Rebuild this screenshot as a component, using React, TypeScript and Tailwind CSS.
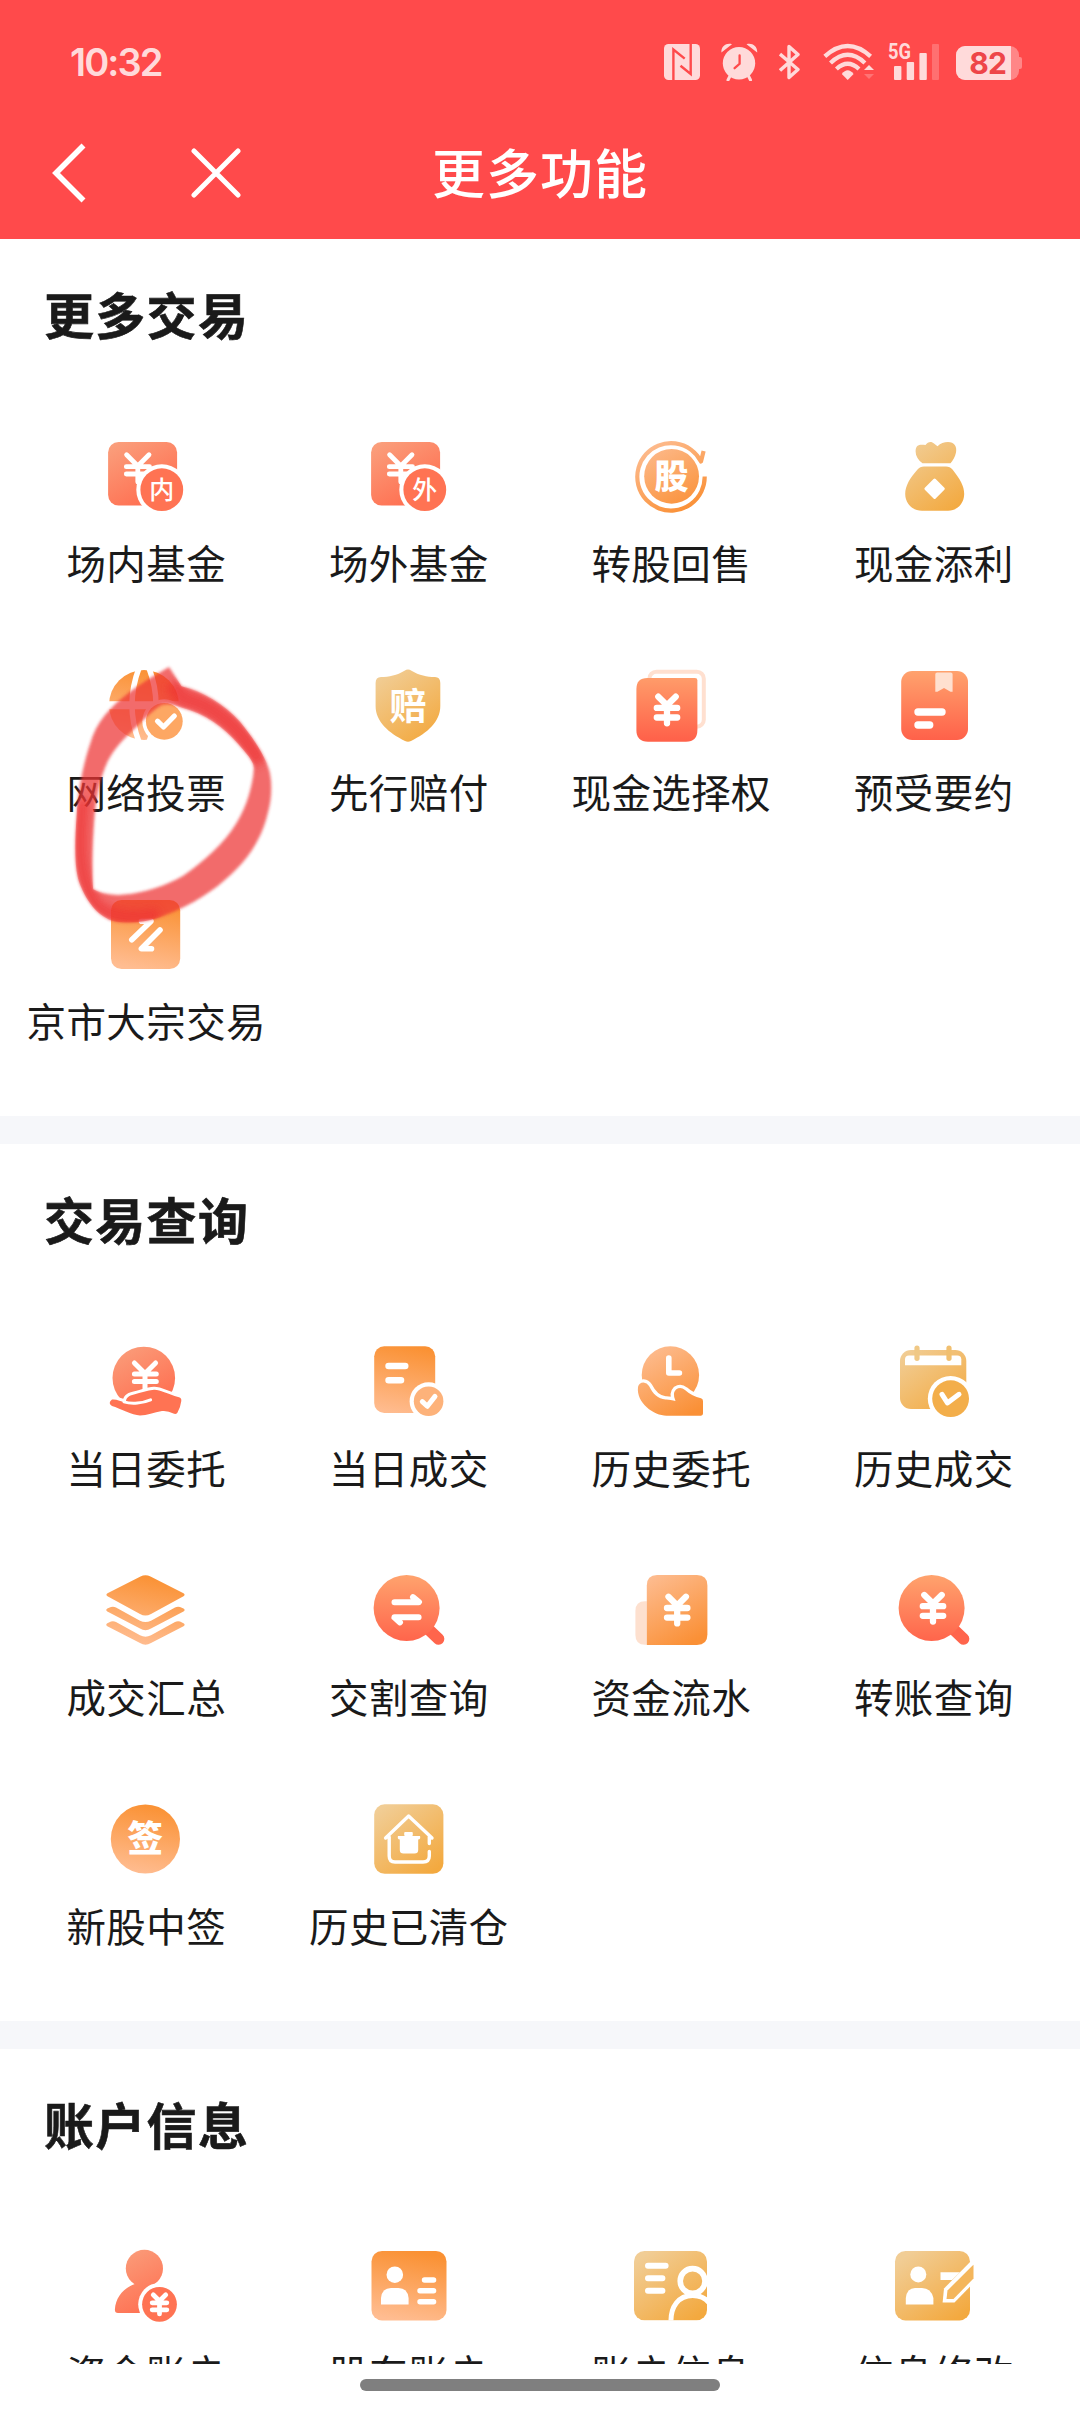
import type { ReactNode } from "react";

const FONT = '"Noto Sans CJK SC", "Noto Sans", sans-serif';

type Tone = "coral" | "red" | "amber" | "orange" | "gold";
const fillOf = (t: Tone) => `url(#g-${t})`;

function Gradients() {
  return (
    <svg className="absolute h-0 w-0" aria-hidden="true">
      <defs>
        <linearGradient id="g-coral" gradientUnits="userSpaceOnUse" x1="14" y1="8" x2="50" y2="72">
          <stop offset="0" stopColor="#faa07d" />
          <stop offset="1" stopColor="#ff6e50" />
        </linearGradient>
        <linearGradient id="g-red" gradientUnits="userSpaceOnUse" x1="44" y1="10" x2="44" y2="78">
          <stop offset="0" stopColor="#ffa26d" />
          <stop offset="1" stopColor="#ff624a" />
        </linearGradient>
        <linearGradient id="g-amber" gradientUnits="userSpaceOnUse" x1="52" y1="10" x2="38" y2="80">
          <stop offset="0" stopColor="#fa9133" />
          <stop offset="1" stopColor="#ffbd92" />
        </linearGradient>
        <linearGradient id="g-orange" gradientUnits="userSpaceOnUse" x1="24" y1="12" x2="62" y2="78">
          <stop offset="0" stopColor="#fdbb8e" />
          <stop offset="1" stopColor="#fa9036" />
        </linearGradient>
        <linearGradient id="g-gold" gradientUnits="userSpaceOnUse" x1="18" y1="12" x2="66" y2="78">
          <stop offset="0" stopColor="#f1cd95" />
          <stop offset="1" stopColor="#f3a93f" />
        </linearGradient>
      </defs>
    </svg>
  );
}

function Icon({ children }: { children: ReactNode }) {
  return (
    <svg viewBox="0 0 88 88" className="block h-[88px] w-[88px] shrink-0" fill="none" strokeLinecap="round" strokeLinejoin="round">
      {children}
    </svg>
  );
}

/* Yuan sign drawn around the point where its arms meet. */
function Yuan({ x, y, s = 1, w = 6.3 }: { x: number; y: number; s?: number; w?: number }) {
  return (
    <path
      transform={`translate(${x} ${y}) scale(${s})`}
      d="M-8.7 -8.6 L0 0 L8.7 -8.6 M0 0 V18 M-10.2 2.6 H10.2 M-10.2 12.2 H10.2"
      stroke="#fff"
      strokeWidth={w}
    />
  );
}

function Glyph({ x, y, size, children, weight = 700 }: { x: number; y: number; size: number; children: string; weight?: number }) {
  return (
    <text x={x} y={y} fontSize={size} fontWeight={weight} fill="#fff" textAnchor="middle" fontFamily={FONT}>
      {children}
    </text>
  );
}

function Fund({ char }: { char: string }) {
  return (
    <Icon>
      <rect x="6.1" y="10" width="69" height="63.5" rx="10.5" fill={fillOf("coral")} />
      <path d="M24.6 22.8 L35.8 34 L47 22.8 M35.8 34 V50 M24.3 34.7 H47.5 M24.3 42 H47.5" stroke="#fff" strokeWidth="4.8" />
      <circle cx="59.8" cy="57.7" r="25.5" fill="#fff" />
      <circle cx="59.8" cy="57.7" r="21.4" fill="#ff7353" />
      <Glyph x={59.8} y={67} size={25} weight={500}>{char}</Glyph>
    </Icon>
  );
}

function Convert() {
  return (
    <Icon>
      <path d="M77.7 44.5 A33.7 33.7 0 1 1 74 29.5 L76.6 19" stroke={fillOf("orange")} strokeWidth="4.2" strokeLinecap="butt" />
      <circle cx="44.6" cy="44.3" r="27.4" fill={fillOf("orange")} />
      <Glyph x={44.6} y={56.6} size={34} weight={900}>股</Glyph>
    </Icon>
  );
}

function MoneyBag() {
  return (
    <Icon>
      <path d="M32.5 31.3 C28 28 25.6 24 25.6 19.5 C25.6 12.5 29.5 12.3 35.5 13 C38 9.2 42 9.4 44 11.6 L47.5 14.2 C50.5 11 54 10 58 10 C64.3 10 67.2 14.5 66 20.5 C65 25 63 28.5 60.5 31.3 Z" fill={fillOf("gold")} />
      <path d="M34 34.4 H56 Q60 34.4 62.5 37.6 C70 47 74.2 54 74.2 62 C74 72 67 78.7 58 78.7 H32 C22 78.7 15.2 71 15.2 62 C15.2 54 20 46 27.5 37.6 Q30 34.4 34 34.4 Z" fill={fillOf("gold")} />
      <path d="M44.6 48 L53.3 56.7 L44.6 65.4 L35.9 56.7 Z" fill="#fff" stroke="#fff" strokeWidth="3" />
    </Icon>
  );
}

function Globe() {
  return (
    <Icon>
      <circle cx="42" cy="44" r="35" fill={fillOf("amber")} />
      <path d="M37 7 Q23 44 37 81 M47 7 Q61 44 47 81" stroke="#fff" strokeWidth="5.5" />
      <path d="M4 44.3 H80" stroke="#fff" strokeWidth="8" />
      <circle cx="62.3" cy="60.3" r="22" fill="#fff" />
      <circle cx="62.3" cy="60.3" r="18.4" fill="#fda763" />
      <path d="M55.5 60.2 L61.5 66 L72.3 55" stroke="#fff" strokeWidth="5.2" />
    </Icon>
  );
}

function Shield() {
  return (
    <Icon>
      <path d="M39.5 9.8 Q43 7 46.5 9.8 C54 14.5 62 16 70 16 Q75.3 16 75.3 22 V45 C75.3 61 62 72 46 80 Q43 81.5 40 80 C24 72 10.6 61 10.6 45 V22 Q10.6 16 16 16 C24 16 32 14.5 39.5 9.8 Z" fill={fillOf("gold")} />
      <Glyph x={43.2} y={58.6} size={37}>赔</Glyph>
    </Icon>
  );
}

function CashOption() {
  return (
    <Icon>
      <rect x="22.4" y="10.7" width="54.4" height="55" rx="7" stroke="#ffe0d0" strokeWidth="4" />
      <path d="M20.4 17 H68 Q70.4 17 70.4 19.4 V69 Q70.4 80.7 59 80.7 H21 Q9.4 80.7 9.4 69 V28 Q9.4 17 20.4 17 Z" fill={fillOf("red")} />
      <Yuan x={40} y={44.3} />
    </Icon>
  );
}

function Offer() {
  return (
    <Icon>
      <rect x="11.2" y="10" width="66.8" height="69" rx="11" fill={fillOf("red")} />
      <path d="M45.3 13.3 Q45.3 11.4 47.2 11.4 H60.7 Q62.6 11.4 62.6 13.3 V30.7 H60.5 L54 26.9 L47.4 30.7 H45.3 Z" fill="#ffe0cf" />
      <path d="M28 51 H52 M28 64 H39.7" stroke="#fff" strokeWidth="7.4" />
    </Icon>
  );
}

function BlockTrade() {
  return (
    <Icon>
      <rect x="9" y="10" width="69.2" height="69" rx="10.5" fill={fillOf("amber")} />
      <path d="M39.5 31.2 H49 L29.8 49.8 M58 40 L39.4 58.8 H49.5" stroke="#fff" strokeWidth="5.6" />
    </Icon>
  );
}

function TodayOrder() {
  return (
    <Icon>
      <circle cx="41.8" cy="41" r="31.3" fill={fillOf("coral")} />
      <path d="M32.4 26 L43 36.5 L53.6 26 M43 36.5 V56 M32.4 36.9 H54.3 M32.4 44.4 H54.3" stroke="#fff" strokeWidth="5" />
      <path
        d="M10 62.5 C14 61.8 19 64.5 24 65.5 C23.5 61 27 58.4 32 57.4 C39 56 45 53.2 52 52.8 C58 52.5 64 56.5 77 60.3 Q79.6 61 79.3 64 Q78.5 70.5 75.4 75.7 Q73.8 77.8 71.4 76.5 Q66 73.4 60 74 C52 75.5 45 78.3 38 78.6 C30 78 18 71.5 10 69 Q5.4 66 10 62.5 Z"
        fill="#ff7353"
        stroke="#fff"
        strokeWidth="6"
        paintOrder="stroke"
      />
      <path d="M22 64.8 C30 67.5 41 66 48.6 62.8" stroke="#fff" strokeWidth="3" />
    </Icon>
  );
}

function TodayDeal() {
  return (
    <Icon>
      <rect x="9.2" y="9.3" width="61" height="66.7" rx="10" fill={fillOf("amber")} />
      <path d="M23.6 29 H40.2 M23.6 43.3 H36" stroke="#fff" strokeWidth="6.6" />
      <circle cx="63.6" cy="64.3" r="19" fill="#fff" />
      <circle cx="63.6" cy="64.3" r="14.8" fill="#fdb27a" />
      <path d="M57.3 64.6 L62.3 69.3 L70 59.4" stroke="#fff" strokeWidth="5" />
    </Icon>
  );
}

function HistoryOrder() {
  return (
    <Icon>
      <circle cx="43.4" cy="38" r="28.7" fill={fillOf("orange")} />
      <path d="M41.8 21 V36 H52.4" stroke="#fff" strokeWidth="5.6" />
      <path
        d="M11 50 Q12 45.5 16.5 45.5 Q20 45.8 22 49 C26 57 31 62 38.5 62.5 Q43 62.3 48.5 64 Q45 56.5 49 52.5 Q53.5 49.5 58 53 C63 57.5 68 59.8 74 61.3 Q76 61.8 76 64 V76.6 Q76 78.7 74 78.7 H39.5 C27 78.7 9 66 11 50 Z"
        fill={fillOf("orange")}
        stroke="#fff"
        strokeWidth="6.6"
        paintOrder="stroke"
      />
    </Icon>
  );
}

function HistoryDeal() {
  return (
    <Icon>
      <rect x="10" y="13" width="66.3" height="59" rx="11" fill={fillOf("gold")} />
      <path d="M15 28.3 V22.3 Q15 18.4 19 18.4 H67.3 Q71.3 18.4 71.3 22.3 V28.3 Z" fill="#fff" />
      <rect x="24.4" y="8.5" width="5.2" height="15.4" rx="2.6" fill="#f0c885" />
      <rect x="56.4" y="8.5" width="5.2" height="15.4" rx="2.6" fill="#f1bf6f" />
      <circle cx="60.6" cy="61.7" r="22.8" fill="#fff" />
      <circle cx="60.6" cy="61.7" r="18.4" fill="#f3ae4a" />
      <path d="M52 57.3 L57.4 65.9 L69 57.3" stroke="#fff" strokeWidth="5" />
    </Icon>
  );
}

function Layers() {
  return (
    <Icon>
      <path d="M38.5 10.5 Q43.4 8 48.5 10.5 L81.5 27.2 Q83.7 28.7 81.5 30.2 L49 48 Q43.4 51 38 48 L5.5 30.2 Q3.3 28.7 5.5 27.2 Z" fill={fillOf("amber")} />
      <path d="M5.3 42.6 L9 41 Q11.5 40.2 14 41.5 L38 54.7 Q43.4 57.5 49 54.7 L73 41.5 Q75.5 40.2 78 41 L81.5 42.6 Q83.8 44 81.5 45.6 L49 62.5 Q43.4 65.8 38 62.5 L5.3 45.6 Q3.2 44 5.3 42.6 Z" fill={fillOf("amber")} />
      <path d="M5.3 57.2 L9 55.6 Q11.5 54.8 14 56.1 L38 69.3 Q43.4 72.1 49 69.3 L73 56.1 Q75.5 54.8 78 55.6 L81.5 57.2 Q83.8 58.6 81.5 60.2 L49 77.1 Q43.4 80.4 38 77.1 L5.3 60.2 Q3.2 58.6 5.3 57.2 Z" fill={fillOf("amber")} />
    </Icon>
  );
}

function Lens({ children }: { children: ReactNode }) {
  return (
    <Icon>
      <path d="M60 60 L73.6 73" stroke="#ff654c" strokeWidth="11.5" />
      <circle cx="41.6" cy="42" r="33" fill={fillOf("red")} />
      {children}
    </Icon>
  );
}

function Delivery() {
  return (
    <Lens>
      <path d="M29.5 36.3 H53.6 M48 31.2 L54 36 M29.5 51.3 H53.6 M35 56.4 L29.5 51.6" stroke="#fff" strokeWidth="6" />
    </Lens>
  );
}

function CashFlow() {
  return (
    <Icon>
      <path d="M19.8 35.3 H18 Q8.4 35.3 8.4 45 V69 Q8.4 78.8 18 78.8 H19.8 Z" fill="#fde0cf" />
      <path d="M30 9 H70 Q80.4 9 80.4 19.5 V68.5 Q80.4 79 70 79 H19.8 V19.5 Q19.8 9 30 9 Z" fill={fillOf("orange")} />
      <Yuan x={50.2} y={39.4} />
    </Icon>
  );
}

function Lottery() {
  return (
    <Icon>
      <circle cx="43.4" cy="44" r="34.6" fill={fillOf("amber")} />
      <Glyph x={43.2} y={57.4} size={36} weight={900}>签</Glyph>
    </Icon>
  );
}

function Cleared() {
  return (
    <Icon>
      <rect x="9.2" y="9.3" width="69.2" height="69.5" rx="10.5" fill={fillOf("gold")} />
      <path d="M20.6 43 L43.6 21 L67 43 M24.2 42 V61 Q24.2 67 30 67 H58 Q64.3 67 64.3 61 V56.5 M64.3 42 V48.5" stroke="#fff" strokeWidth="3.4" />
      <rect x="39.2" y="37" width="8.6" height="4" rx="1" fill="#fff" />
      <path d="M33 41 H55 Q56 44 53.2 44.6 V55 Q53.2 58.6 49.5 58.6 H38.5 Q34.8 58.6 34.8 55 V44.6 Q32 44 33 41 Z" fill="#fff" />
    </Icon>
  );
}

function FundAccount() {
  return (
    <Icon>
      <circle cx="42.4" cy="26.4" r="18.6" fill={fillOf("coral")} />
      <path d="M34 40 H52 L64 71 H16 Q12.8 71 12.9 67.5 C13.5 55 22 45.5 34 41.5 Z" fill={fillOf("coral")} />
      <circle cx="57.5" cy="62.3" r="21.3" fill="#fff" />
      <circle cx="57.5" cy="62.3" r="17.4" fill="#ff7353" />
      <Yuan x={57.5} y={59} s={0.72} w={6.6} />
    </Icon>
  );
}

function Holder() {
  return (
    <Icon>
      <rect x="6.5" y="9" width="75" height="69.4" rx="10.5" fill={fillOf("amber")} />
      <circle cx="29.8" cy="32.7" r="8.3" fill="#fff" />
      <path d="M16 62.6 V56 Q17 46 26 46 H33.5 Q42.5 46 43.6 56 V62.6 Z" fill="#fff" />
      <path d="M59.5 38 H68.6 M55 48.8 H68.6 M55 59.8 H68.6" stroke="#fff" strokeWidth="5.4" />
    </Icon>
  );
}

function AccountInfo() {
  return (
    <Icon>
      <clipPath id="card-clip">
        <rect x="7" y="9" width="73" height="69.4" rx="10.5" />
      </clipPath>
      <g clipPath="url(#card-clip)">
        <rect x="7" y="9" width="73" height="69.4" fill={fillOf("gold")} />
        <path d="M21 23.7 H38.6 M21 36.2 H35.4 M21 48.7 H35.4" stroke="#fff" strokeWidth="6" />
        <path d="M44 82 C43 64 52 53.5 65.6 53.5 C76 53.5 82 59 85 66" stroke="#fff" strokeWidth="5" />
        <circle cx="65.6" cy="39" r="12.4" stroke="#fff" strokeWidth="5.6" />
      </g>
    </Icon>
  );
}

function EditInfo() {
  return (
    <Icon>
      <rect x="5" y="9" width="75" height="69.4" rx="10.5" fill={fillOf("gold")} />
      <circle cx="28.3" cy="32.4" r="8" fill="#fff" />
      <path d="M15.8 62.6 V56 Q17 46 25 46 H32 Q41 46 43.4 56 V62.6 Z" fill="#fff" />
      <path d="M50.5 30.2 H70 L62 38 H50.5 Z" fill="#fff" />
      <path d="M83 17 L54 46.5 L52.6 60.5 L64.5 60.5 L86 38.5 Z" fill="#fff" />
      <path d="M81.6 24.5 L57.5 48.5 L56.5 57 L63.5 57 L83.5 36.5 V22.8 Z" fill="#f4b65c" />
    </Icon>
  );
}

type Entry = { label: string; icon: ReactNode };

const sections: { title: string; items: Entry[] }[] = [
  {
    title: "更多交易",
    items: [
      { label: "场内基金", icon: <Fund char="内" /> },
      { label: "场外基金", icon: <Fund char="外" /> },
      { label: "转股回售", icon: <Convert /> },
      { label: "现金添利", icon: <MoneyBag /> },
      { label: "网络投票", icon: <Globe /> },
      { label: "先行赔付", icon: <Shield /> },
      { label: "现金选择权", icon: <CashOption /> },
      { label: "预受要约", icon: <Offer /> },
      { label: "京市大宗交易", icon: <BlockTrade /> },
    ],
  },
  {
    title: "交易查询",
    items: [
      { label: "当日委托", icon: <TodayOrder /> },
      { label: "当日成交", icon: <TodayDeal /> },
      { label: "历史委托", icon: <HistoryOrder /> },
      { label: "历史成交", icon: <HistoryDeal /> },
      { label: "成交汇总", icon: <Layers /> },
      { label: "交割查询", icon: <Delivery /> },
      { label: "资金流水", icon: <CashFlow /> },
      { label: "转账查询", icon: <Lens><Yuan x={43} y={37.6} /></Lens> },
      { label: "新股中签", icon: <Lottery /> },
      { label: "历史已清仓", icon: <Cleared /> },
    ],
  },
  {
    title: "账户信息",
    items: [
      { label: "资金账户", icon: <FundAccount /> },
      { label: "股东账户", icon: <Holder /> },
      { label: "账户信息", icon: <AccountInfo /> },
      { label: "信息修改", icon: <EditInfo /> },
    ],
  },
];

function StatusBar() {
  return (
    <div className="flex items-start justify-between pt-[43px] pr-[58px] pl-[70px] text-[#ffdada]">
      <span className="font-['Inter'] text-[38px] leading-[38px] font-semibold tracking-[-1.9px]">10:32</span>
      <div className="flex h-[38px] items-start">
        <svg viewBox="0 -1 36 38" className="h-[38px] w-[36px]" fill="none">
          <rect width="36" height="36" rx="4.5" fill="currentColor" />
          <path d="M9.4 36 V5.5 L20.7 14.6 M26.7 0 V30 L16.5 21.8" stroke="#ff4a4b" strokeWidth="2.4" />
        </svg>
        <svg viewBox="0 0 37 38" className="ml-[21px] h-[38px] w-[37px]" fill="currentColor">
          <circle cx="18" cy="20.3" r="16.2" />
          <path d="M0.4 9.5 C0 3 5.5 -0.5 11 1.2 Z M36.2 9.5 C36.6 3 31 -0.5 25.5 1.2 Z" />
          <path d="M9 33 L7 37 M27.5 33 L29.5 37" stroke="currentColor" strokeWidth="3" strokeLinecap="round" />
          <path d="M18.6 12.5 V20.8 L13.6 25.2" fill="none" stroke="#ff4a4b" strokeWidth="2.3" strokeLinecap="round" />
        </svg>
        <svg viewBox="0 -1 21 38" className="ml-[21px] h-[38px] w-[21px]" fill="none" stroke="currentColor" strokeWidth="3.4">
          <path d="M1 10 L19 25.5 L10 33.5 V2.5 L19 10.5 L1 26.5" strokeLinejoin="round" />
        </svg>
        <svg viewBox="0 -1 51 38" className="ml-[23px] h-[38px] w-[51px]" fill="none" stroke="currentColor" strokeWidth="4.3">
          <path d="M1.8 12.4 Q24.7 -8.4 47.6 12.4 M7.5 19 Q24.7 2.6 41.9 19 M13.4 25 Q24.7 14.6 36 25" />
          <path d="M18.8 30 Q24.7 22.5 30.6 30 L24.7 36 Z" fill="currentColor" stroke="none" />
          <path d="M41 26 L46 21 L51 26 Z" fill="currentColor" stroke="none" />
          <path d="M41 30 L46 35 L51 30 Z" fill="#ff7374" stroke="none" />
        </svg>
        <svg viewBox="0 0 51 38" className="ml-[14px] h-[38px] w-[51px] overflow-visible" fill="currentColor">
          <text x="0" y="15.8" fontSize="21.5" fontWeight="700" fontFamily="Roboto, sans-serif" textLength="23" lengthAdjust="spacingAndGlyphs">5G</text>
          <rect x="6" y="23" width="7.4" height="14" rx="1" />
          <rect x="18.7" y="19" width="7.4" height="18" rx="1" />
          <rect x="31.4" y="10" width="7.4" height="27" rx="1" />
          <rect x="44" y="1" width="7" height="36" rx="1" fill="#ff7071" />
        </svg>
        <div className="mt-[3px] ml-[17px] flex items-center">
          <div className="flex h-[34px] w-[63px] items-center overflow-hidden rounded-[9px] bg-[#ff8687]">
            <div className="flex h-[34px] w-[55px] items-center justify-end bg-[#ffdada] pr-[5px] font-['Inter'] text-[30px] leading-[34px] font-bold tracking-[-0.8px] text-[#ee4548]">
              82
            </div>
          </div>
          <div className="h-[12px] w-[3px] rounded-r-[2px] bg-[#ff8687]" />
        </div>
      </div>
    </div>
  );
}

function NavBar() {
  return (
    <div className="relative mt-[46px] flex h-[92px] items-center justify-center">
      <svg viewBox="0 0 34 60" className="absolute left-[52px] h-[60px] w-[34px]" fill="none">
        <path d="M31.5 2.5 L4 30 L31.5 57.5" stroke="#fff" strokeWidth="5.6" />
      </svg>
      <svg viewBox="0 0 50 50" className="absolute left-[191px] h-[50px] w-[50px]" fill="none">
        <path d="M3 3 L47 47 M47 3 L3 47" stroke="#fff" strokeWidth="5" strokeLinecap="round" />
      </svg>
      <h1 className="mb-1 text-[53px] leading-[60px] font-medium tracking-[1px] text-white">更多功能</h1>
    </div>
  );
}

const LOOP =
  "M490 82 L526 140 C590 155 650 195 695 245 C730 290 765 340 780 390 C790 430 788 480 775 525 C758 600 715 665 650 722 C600 768 530 808 460 833 C420 846 370 854 325 842 C275 825 240 765 226 715 C214 660 218 590 222 530 C226 450 242 370 262 310 C278 250 320 200 375 158 C410 130 450 105 490 82 Z " +
  "M528 204 C590 220 650 262 690 312 C715 342 735 362 736 385 C732 440 715 500 685 550 C650 610 590 665 530 708 C480 738 420 758 360 764 C330 767 295 762 270 748 C266 700 268 610 274 530 C280 460 292 410 312 365 C335 320 365 292 395 262 C420 235 445 210 470 195 C490 190 510 197 528 204 Z";

/* Hand-drawn marker loop lying over the vote entry. */
function MarkerLoop() {
  return (
    <svg
      viewBox="200 70 600 800"
      preserveAspectRatio="none"
      className="pointer-events-none absolute top-[424px] left-[69px] h-[267px] w-[207px]"
    >
      <defs>
        <filter id="soft" x="-5%" y="-5%" width="110%" height="110%">
          <feGaussianBlur stdDeviation="5" />
        </filter>
        <filter id="softer" x="-20%" y="-20%" width="140%" height="140%">
          <feGaussianBlur stdDeviation="12" />
        </filter>
        <clipPath id="loop">
          <path clipRule="evenodd" d={LOOP} />
        </clipPath>
      </defs>
      <path d={LOOP} fillRule="evenodd" fill="#ee3436" opacity="0.73" filter="url(#soft)" />
      <g clipPath="url(#loop)">
        <g fill="none" stroke="#ee3032" opacity="0.65" filter="url(#softer)">
          <path d="M500 130 L530 175 C620 195 700 265 755 370" strokeWidth="50" />
          <path d="M240 480 C230 600 225 700 270 780 C300 830 380 840 460 822" strokeWidth="38" />
        </g>
      </g>
    </svg>
  );
}

function Section({ title, items, children }: { title: string; items: Entry[]; children?: ReactNode }) {
  return (
    <section className="relative bg-white pt-[49px] pb-[76px]">
      <h2 className="pl-[44px] text-[50px] leading-[51px] font-bold tracking-[1.3px] text-[#1a1a1a] [-webkit-text-stroke:0.6px_#1a1a1a]">{title}</h2>
      <div className="mt-[93px] grid grid-cols-4 gap-y-[79px] px-[15px]">
        {items.map((it) => (
          <div key={it.label} className="flex flex-col items-center">
            {it.icon}
            <span className="mt-[22px] text-[39.5px] leading-10 tracking-[0.4px] whitespace-nowrap text-[#1a1a1a]">{it.label}</span>
          </div>
        ))}
      </div>
      {children}
    </section>
  );
}

export default function App() {
  return (
    <div className="flex h-[2412px] w-[1080px] flex-col overflow-hidden bg-white font-['Noto_Sans_CJK_SC','Noto_Sans',sans-serif]">
      <Gradients />
      <header className="h-[239px] shrink-0 bg-[#ff4a4b]">
        <StatusBar />
        <NavBar />
      </header>
      <main className="flex h-[2125px] shrink-0 flex-col gap-7 overflow-hidden bg-[#f6f7fa]">
        {sections.map((s, i) => (
          <Section key={s.title} title={s.title} items={s.items}>
            {i === 0 && <MarkerLoop />}
          </Section>
        ))}
      </main>
      <footer className="flex h-12 shrink-0 justify-center bg-white pt-[15px]">
        <div className="h-3 w-[360px] rounded-full bg-[#7f7f7f]" />
      </footer>
    </div>
  );
}
